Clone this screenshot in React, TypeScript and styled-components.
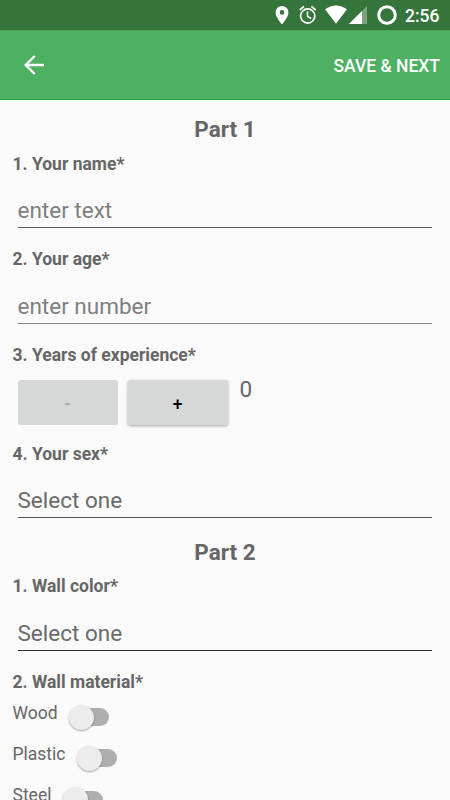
import React from 'react';
import styled, { createGlobalStyle } from 'styled-components';

const GlobalStyle = createGlobalStyle`
  * { box-sizing: border-box; }
  body { margin: 0; background: #fafafa; font-family: Roboto, sans-serif; }
`;

const Screen = styled.div`
  width: 450px;
  height: 800px;
  overflow: hidden;
  background: #fafafa;
  color: #666;
`;

const StatusBar = styled.header`
  height: 30px;
  padding-right: 10px;
  background: #35753c;
  color: #fff;
  display: flex;
  justify-content: flex-end;
  align-items: center;
`;

const StatusIcons = styled.svg`
  width: 130px;
  height: 30px;
  margin-right: 5px;
`;

const Clock = styled.time`
  font-size: 17.5px;
  line-height: 30px;
  padding-top: 2px;
  font-weight: 500;
  width: 35px;
  white-space: nowrap;
`;

const Toolbar = styled.nav`
  height: 70px;
  padding: 0 10px 0 24px;
  background: #4eb063;
  border-top: 1px solid #4ba55c;
  border-bottom: 1px solid #1ca43c;
  display: flex;
  justify-content: space-between;
  align-items: center;
`;

const IconButton = styled.button`
  padding: 0;
  border: 0;
  background: none;
  display: flex;
`;

const Action = styled.button`
  padding: 2px 0 0;
  border: 0;
  background: none;
  color: #fff;
  font: 500 17.5px/20px Roboto, sans-serif;
  white-space: nowrap;
`;

const Form = styled.main`
  padding: 16px 12.5px 0;
`;

const PartTitle = styled.h2<{ $top?: number; $bottom: number }>`
  margin: ${(p) => p.$top ?? 0}px 0 ${(p) => p.$bottom}px;
  font-size: 22.5px;
  line-height: 26px;
  font-weight: 700;
  text-align: center;
`;

const Label = styled.h3<{ $top?: number }>`
  margin: ${(p) => p.$top ?? 0}px 0 0;
  font-size: 17.5px;
  line-height: 20px;
  font-weight: 700;
`;

const Field = styled.div<{ $line: string; $hint?: boolean; $height?: number }>`
  height: ${(p) => p.$height ?? 55}px;
  margin: 0 6px 0 5px;
  padding-bottom: 4px;
  display: flex;
  align-items: flex-end;
  border-bottom: 1px solid ${(p) => p.$line};
  font-size: 22.5px;
  line-height: 26px;
  color: ${(p) => (p.$hint ? '#7f7f7f' : '#6a6a6a')};
`;

const Stepper = styled.div`
  display: flex;
  gap: 10px;
  margin: 15px 5px 0;
  height: 45px;
`;

const StepButton = styled.button`
  width: 100px;
  height: 45px;
  padding: 0;
  border: 0;
  border-radius: 2.5px;
  background: #d6d8d7;
  color: #000;
  font: 500 17.5px/20px Roboto, sans-serif;
  padding-top: 2px;
  box-shadow: 0 1px 3px rgba(0, 0, 0, 0.35);
  &:disabled {
    color: #a3a4a4;
    box-shadow: none;
  }
`;

const Count = styled.output`
  margin: -4px 0 0 2px;
  font-size: 22.5px;
  line-height: 26px;
`;

const Options = styled.div`
  padding-top: 10.5px;
`;

const Option = styled.div`
  display: flex;
  align-items: flex-start;
  gap: 11.5px;
  height: 41.3px;
  font-size: 17.5px;
  line-height: 20px;
`;

const Track = styled.span`
  width: 34px;
  height: 18px;
  margin: 5.5px 0 0 6px;
  border-radius: 9px;
  background: #aeaeae;
  display: flex;
  align-items: center;
`;

const Thumb = styled.span`
  flex: none;
  width: 25px;
  height: 25px;
  margin-left: -6px;
  border-radius: 50%;
  background: #ececec;
  box-shadow: 0 1px 2px rgba(0, 0, 0, 0.35);
`;

const materials = ['Wood', 'Plastic', 'Steel'];

export default function App() {
  return (
    <Screen>
      <GlobalStyle />
      <StatusBar>
        <StatusIcons viewBox="270 0 130 30" fill="none">
          <path
            fill="#fff"
            fillRule="evenodd"
            d="M282 6a6.4 6.4 0 0 0-6.4 6.4C275.600 17.200 282 24.300 282 24.300s6.400-7.100 6.400-11.900A6.400 6.400 0 0 0 282 6zm0 4.100a2.300 2.300 0 1 1 0 4.600a2.300 2.300 0 0 1 0-4.600z"
          />
          <g stroke="#fff">
            <circle cx="307.700" cy="16" r="7.100" strokeWidth="1.700" />
            <path d="M307.500 11.500V16.300L311 18.500" strokeWidth="1.500" />
            <path d="M299.700 10L304 6.400M311.400 6.400L315.700 10" strokeWidth="1.700" />
            <circle cx="387" cy="15" r="8.300" strokeWidth="3" />
          </g>
          <path fill="#fff" d="M325 9.300Q336 1.700 347 9.300L336 23.700z" />
          <path fill="#fff" fillOpacity=".35" d="M367 6V24H349z" />
          <path fill="#fff" d="M362 11V24H349z" />
        </StatusIcons>
        <Clock>2:56</Clock>
      </StatusBar>
      <Toolbar>
        <IconButton aria-label="Back">
          <svg width="21" height="20" viewBox="0 0 21 20" fill="none" stroke="#fff" strokeWidth="2.400">
            <path d="M20 10H2.500M10.700 1L1.700 10L10.700 19" />
          </svg>
        </IconButton>
        <Action>SAVE &amp; NEXT</Action>
      </Toolbar>
      <Form>
        <PartTitle $bottom={12}>Part 1</PartTitle>
        <Label>1. Your name*</Label>
        <Field $line="#5c5c5c" $hint $height={54}>enter text</Field>
        <Label $top={21}>2. Your age*</Label>
        <Field $line="#858585" $hint>enter number</Field>
        <Label $top={21}>3. Years of experience*</Label>
        <Stepper>
          <StepButton disabled>-</StepButton>
          <StepButton>+</StepButton>
          <Count>0</Count>
        </Stepper>
        <Label $top={19}>4. Your sex*</Label>
        <Field $line="#555" $height={54}>Select one</Field>
        <PartTitle $top={21} $bottom={11}>Part 2</PartTitle>
        <Label>1. Wall color*</Label>
        <Field $line="#2d2d2d">Select one</Field>
        <Label $top={21}>2. Wall material*</Label>
        <Options>
          {materials.map((name) => (
            <Option key={name}>
              {name}
              <Track role="switch" aria-checked={false} aria-label={name}>
                <Thumb />
              </Track>
            </Option>
          ))}
        </Options>
      </Form>
    </Screen>
  );
}
